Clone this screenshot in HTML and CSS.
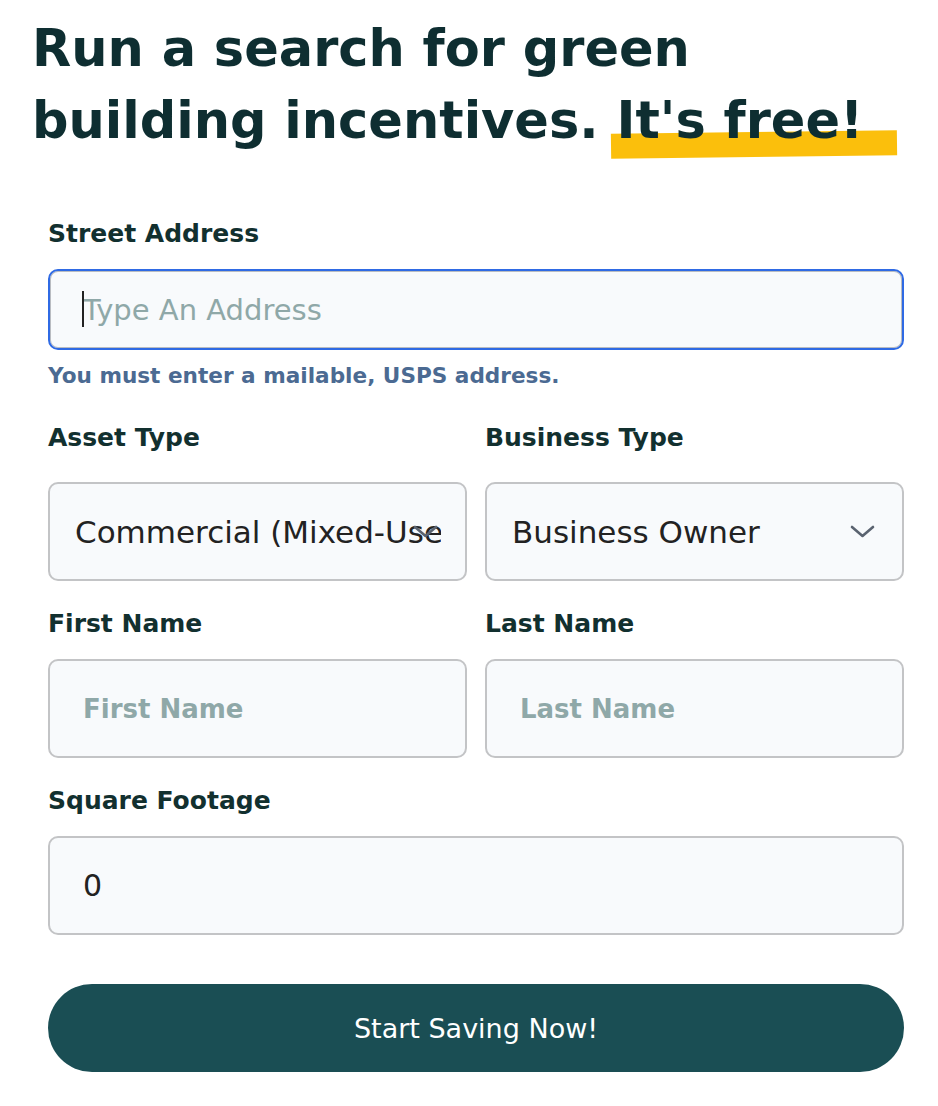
FILE: index.html
```html
<!DOCTYPE html>
<html lang="en">
<head>
<meta charset="utf-8">
<title>Green building incentives search</title>
<link rel="stylesheet" href="styles.css">
</head>
<body>
<h1 class="title">Run a search for green<br>building incentives. <span class="hl">It's free!</span></h1>
<form class="form">
  <div class="field field-addr">
    <label class="label" for="addr">Street Address</label>
    <div class="focus-wrap">
      <input id="addr" class="input input-addr" type="text" placeholder="Type An Address">
      <span class="caret"></span>
    </div>
    <p class="help">You must enter a mailable, USPS address.</p>
  </div>
  <div class="row">
    <div class="field">
      <label class="label label-sel" for="asset">Asset Type</label>
      <div class="select-wrap">
        <select id="asset" class="input select"><option>Commercial (Mixed-Use)</option></select>
        <svg class="chev" width="25" height="13" viewBox="0 0 25 13"><polyline points="2,2 12.5,11 23,2" fill="none" stroke="#5a6370" stroke-width="2.6" stroke-linecap="round" stroke-linejoin="round"/></svg>
      </div>
    </div>
    <div class="field">
      <label class="label label-sel" for="biz">Business Type</label>
      <div class="select-wrap">
        <select id="biz" class="input select"><option>Business Owner</option></select>
        <svg class="chev" width="25" height="13" viewBox="0 0 25 13"><polyline points="2,2 12.5,11 23,2" fill="none" stroke="#5a6370" stroke-width="2.6" stroke-linecap="round" stroke-linejoin="round"/></svg>
      </div>
    </div>
  </div>
  <div class="row">
    <div class="field">
      <label class="label" for="fn">First Name</label>
      <input id="fn" class="input input-name" type="text" placeholder="First Name">
    </div>
    <div class="field">
      <label class="label" for="ln">Last Name</label>
      <input id="ln" class="input input-name" type="text" placeholder="Last Name">
    </div>
  </div>
  <div class="field">
    <label class="label" for="sq">Square Footage</label>
    <input id="sq" class="input input-num" type="text" value="0">
  </div>
  <button class="btn" type="button">Start Saving Now!</button>
</form>
</body>
</html>
```
FILE: styles.css
```css
* { box-sizing: border-box; }
body {
  margin: 0;
  background: #ffffff;
  font-family: "DejaVu Sans", "Open Sans", sans-serif;
  color: #12302f;
}
.title {
  margin: 0 0 59px 0;
  padding: 13px 20px 0 32px;
  font-size: 51px;
  line-height: 72px;
  font-weight: 700;
  color: #0e2e31;
  white-space: nowrap;
}
.hl {
  position: relative;
  z-index: 0;
  font-weight: 800;
}
.hl::before {
  content: "";
  position: absolute;
  z-index: -1;
  left: -5px;
  right: -34px;
  top: 41px;
  height: 25px;
  background: #fbbf0c;
  transform: rotate(-0.7deg);
  filter: blur(0.5px);
}
.form {
  padding: 0 34px 34px 48px;
}
.field {
  margin-bottom: 25px;
}
.field-addr { margin-bottom: 29px; }
.label {
  display: block;
  font-size: 25px;
  line-height: 36px;
  font-weight: 700;
  color: #12302f;
  margin-bottom: 17px;
}
.label-sel { margin-bottom: 26px; }
.input {
  display: block;
  width: 100%;
  height: 99px;
  border: 2px solid #c3c4c6;
  border-radius: 10px;
  background: #f8fafc;
  padding: 0 24px 0 33px;
  font-family: "DejaVu Sans", "Open Sans", sans-serif;
  font-size: 28px;
  color: #222;
  outline: none;
}
.input::placeholder { color: #8fa8a8; opacity: 1; }
.focus-wrap { position: relative; }
.input-addr {
  height: 81px;
  border-color: #2f6ae4;
  box-shadow: inset 0 0 0 1px #b9bcc1;
  font-size: 29px;
}
.caret {
  position: absolute;
  left: 34px;
  top: 22px;
  width: 2px;
  height: 36px;
  background: #222;
}
.input-name::placeholder { font-weight: 700; }
.input-name { font-size: 26px; }
.help {
  margin: 11px 0 0 0;
  font-size: 21.6px;
  line-height: 30px;
  font-weight: 700;
  color: #4b6a92;
}
.row {
  display: grid;
  grid-template-columns: 1fr 1fr;
  column-gap: 18px;
}
.select-wrap { position: relative; }
.select {
  appearance: none;
  -webkit-appearance: none;
  padding-left: 25px;
  padding-right: 24px;
  font-size: 31px;
}
.chev {
  position: absolute;
  right: 29px;
  top: 43px;
  pointer-events: none;
}
.input-num { padding-left: 33px; font-size: 30px; }
.btn {
  display: block;
  width: 100%;
  height: 88px;
  margin-top: 49px;
  border: none;
  border-radius: 44px;
  background: #1a4e54;
  color: #ffffff;
  font-family: "DejaVu Sans", "Open Sans", sans-serif;
  font-size: 27px;
  font-weight: 400;
}
```
